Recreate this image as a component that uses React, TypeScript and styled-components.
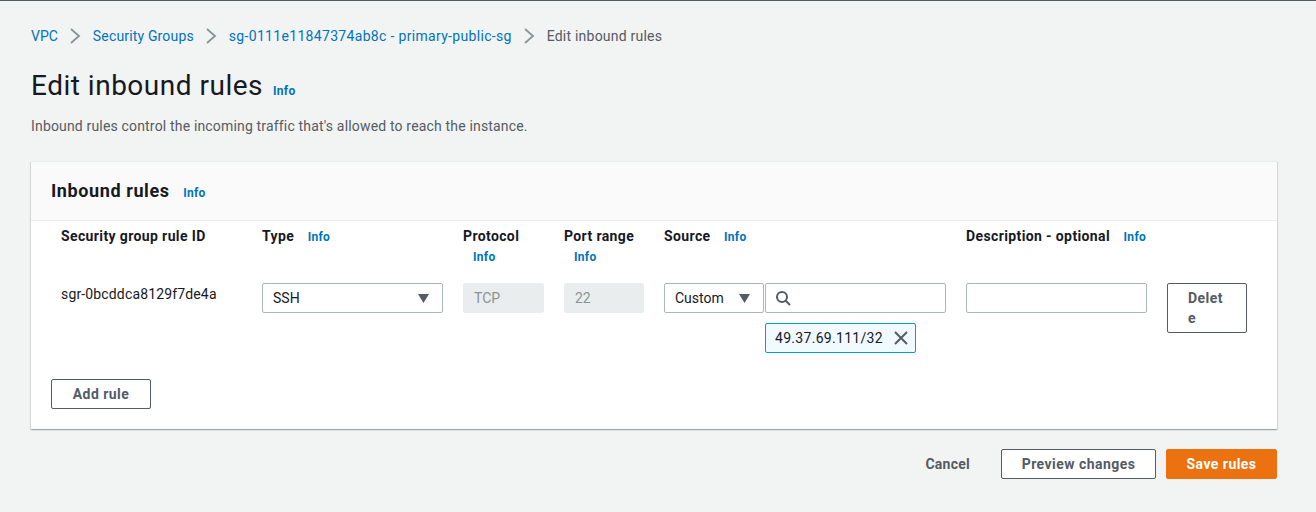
import React from "react";
import styled, { createGlobalStyle } from "styled-components";

const GlobalStyle = createGlobalStyle`
  html, body { margin: 0; padding: 0; background: #f2f3f3; }
  body { font-family: "Roboto", "Liberation Sans", sans-serif; font-size: 14px; color: #16191f; }
`;

const Page = styled.div`
  height: 512px;
  box-sizing: border-box;
  border-top: 1px solid #545b64;
  padding: 25px 39px 0 31px;
  overflow: hidden;
`;

const Breadcrumbs = styled.nav`
  display: flex;
  align-items: center;
  height: 20px;
  font-size: 14px;
  line-height: 20px;
`;

const Crumb = styled.a<{ $spacing: number }>`
  color: #0073bb;
  letter-spacing: ${(p) => p.$spacing}px;
`;

const CurrentCrumb = styled.span`
  color: #545b64;
  letter-spacing: 0.22px;
`;

const Chevron = styled.svg`
  width: 12px;
  height: 18px;
  margin: 0 12px 0 11px;
  flex: none;
`;

const TitleRow = styled.div`
  display: flex;
  align-items: baseline;
  margin-top: 23px;
`;

const Title = styled.h1`
  margin: 0;
  font-size: 28px;
  font-weight: 400;
  line-height: 34px;
  letter-spacing: 0.5px;
`;

const Info = styled.a`
  color: #0073bb;
  font-size: 12px;
  font-weight: 700;
  line-height: 20px;
  margin-left: 10px;
  letter-spacing: 0.3px;
`;

const InlineInfo = styled(Info)`
  margin-left: 13.5px;
`;

const Lead = styled.p`
  margin: 13px 0 0;
  color: #545b64;
  font-size: 14px;
  line-height: 20px;
  letter-spacing: 0.17px;
`;

const Card = styled.section`
  margin-top: 25px;
  background: #fff;
  border-top: 1px solid #eaeded;
  box-shadow: 0 1px 1px 0 rgba(0, 28, 36, 0.2), 1px 1px 1px 0 rgba(0, 28, 36, 0.1), -1px 1px 1px 0 rgba(0, 28, 36, 0.1);
  height: 268px;
  box-sizing: border-box;
`;

const CardHeader = styled.header`
  display: flex;
  align-items: baseline;
  height: 59px;
  box-sizing: border-box;
  padding: 17px 20px 0;
  background: #fafafa;
  border-bottom: 1px solid #eaeded;
`;

const CardTitle = styled.h2`
  margin: 0;
  font-size: 18px;
  font-weight: 700;
  line-height: 24px;
  letter-spacing: 0.6px;
`;

const CardBody = styled.div`
  padding: 5px 20px 0;
`;

const RuleGrid = styled.div`
  display: grid;
  grid-template-columns: 181px 181px 81px 80px 282px 181px 80px;
  column-gap: 20px;
  padding: 0 10px;
`;

const HeadCell = styled.div`
  height: 57px;
  line-height: 20px;
`;

const Label = styled.span`
  font-weight: 700;
  color: #16191f;
  letter-spacing: 0.38px;
`;

const StackedInfo = styled(Info)`
  display: block;
  margin: 1px 0 0 10px;
`;

const RuleId = styled.div`
  line-height: 20px;
  padding-top: 1px;
  letter-spacing: 0.15px;
`;

const Field = styled.div`
  height: 30px;
  box-sizing: border-box;
  border: 1px solid #aab7b8;
  border-radius: 2px;
  background: #fff;
  display: flex;
  align-items: center;
  padding: 0 10px;
  line-height: 20px;
  color: #16191f;
`;

const SelectField = styled(Field)`
  justify-content: space-between;
  padding-right: 13px;
`;

const DisabledField = styled(Field)`
  background: #eaeded;
  border-color: #eaeded;
  color: #879596;
`;

const Caret = styled.svg`
  width: 11px;
  height: 9px;
  flex: none;
`;

const SourceControls = styled.div`
  display: grid;
  grid-template-columns: 100px 181px;
  column-gap: 1px;
`;

const SearchIcon = styled.svg`
  width: 16px;
  height: 16px;
  margin-left: -1px;
`;

const Tag = styled.div`
  grid-column: 2;
  justify-self: start;
  margin-top: 10px;
  width: 151px;
  height: 30px;
  box-sizing: border-box;
  display: flex;
  align-items: center;
  justify-content: space-between;
  padding: 0 7px 0 9px;
  background: #f1faff;
  border: 1px solid #00a1c9;
  border-radius: 2px;
  line-height: 20px;
  letter-spacing: 0.3px;
`;

const TagClose = styled.svg`
  width: 14px;
  height: 14px;
  flex: none;
`;

const Button = styled.button<{ $w: number }>`
  width: ${(p) => p.$w}px;
  height: 30px;
  box-sizing: border-box;
  padding: 0;
  font-family: inherit;
  font-size: 14px;
  font-weight: 700;
  line-height: 20px;
  color: #545b64;
  background: #fff;
  border: 1px solid #545b64;
  border-radius: 2px;
  letter-spacing: 0.45px;
`;

const DeleteButton = styled(Button)`
  height: 50px;
  padding: 4px 20px;
  text-align: left;
  word-break: break-all;
`;

const AddRule = styled(Button)`
  display: block;
  margin-top: 26px;
`;

const Footer = styled.div`
  display: flex;
  justify-content: flex-end;
  align-items: center;
  margin-top: 20px;
`;

const CancelLink = styled.a`
  color: #545b64;
  font-weight: 700;
  letter-spacing: 0.25px;
  margin-right: 31px;
`;

const PrimaryButton = styled(Button)`
  margin-left: 10px;
  background: #ec7211;
  border-color: #ec7211;
  color: #fff;
`;

const ChevronIcon = () => (
  <Chevron viewBox="0 0 12 18" fill="none" stroke="#879596" strokeWidth="1.8">
    <path d="M2 2l8 7-8 7" />
  </Chevron>
);

const CaretIcon = () => (
  <Caret viewBox="0 0 11 9">
    <path d="M0 0h11L5.5 9z" fill="#545b64" />
  </Caret>
);

export default function App() {
  return (
    <Page>
      <GlobalStyle />
      <Breadcrumbs>
        <Crumb $spacing={0}>VPC</Crumb>
        <ChevronIcon />
        <Crumb $spacing={0.16}>Security Groups</Crumb>
        <ChevronIcon />
        <Crumb $spacing={0.32}>sg-0111e11847374ab8c - primary-public-sg</Crumb>
        <ChevronIcon />
        <CurrentCrumb>Edit inbound rules</CurrentCrumb>
      </Breadcrumbs>
      <TitleRow>
        <Title>Edit inbound rules</Title>
        <Info>Info</Info>
      </TitleRow>
      <Lead>Inbound rules control the incoming traffic that's allowed to reach the instance.</Lead>
      <Card>
        <CardHeader>
          <CardTitle>Inbound rules</CardTitle>
          <InlineInfo>Info</InlineInfo>
        </CardHeader>
        <CardBody>
          <RuleGrid>
            <HeadCell><Label>Security group rule ID</Label></HeadCell>
            <HeadCell><Label>Type</Label><InlineInfo>Info</InlineInfo></HeadCell>
            <HeadCell><Label>Protocol</Label><StackedInfo>Info</StackedInfo></HeadCell>
            <HeadCell><Label>Port range</Label><StackedInfo>Info</StackedInfo></HeadCell>
            <HeadCell><Label>Source</Label><InlineInfo>Info</InlineInfo></HeadCell>
            <HeadCell><Label>Description - optional</Label><InlineInfo>Info</InlineInfo></HeadCell>
            <HeadCell />

            <RuleId>sgr-0bcddca8129f7de4a</RuleId>
            <div>
              <SelectField>SSH<CaretIcon /></SelectField>
            </div>
            <div><DisabledField>TCP</DisabledField></div>
            <div><DisabledField>22</DisabledField></div>
            <SourceControls>
              <SelectField>Custom<CaretIcon /></SelectField>
              <Field>
                <SearchIcon viewBox="0 0 16 16" fill="none" stroke="#545b64" strokeWidth="2">
                  <circle cx="7" cy="7" r="5" />
                  <path d="M10.5 10.5L15 15" />
                </SearchIcon>
              </Field>
              <Tag>
                49.37.69.111/32
                <TagClose viewBox="0 0 14 14" fill="none" stroke="#545b64" strokeWidth="2">
                  <path d="M1 1l12 12M13 1L1 13" />
                </TagClose>
              </Tag>
            </SourceControls>
            <div><Field /></div>
            <div><DeleteButton $w={80}>Delete</DeleteButton></div>
          </RuleGrid>
          <AddRule $w={100}>Add rule</AddRule>
        </CardBody>
      </Card>
      <Footer>
        <CancelLink>Cancel</CancelLink>
        <Button $w={155}>Preview changes</Button>
        <PrimaryButton $w={111}>Save rules</PrimaryButton>
      </Footer>
    </Page>
  );
}
